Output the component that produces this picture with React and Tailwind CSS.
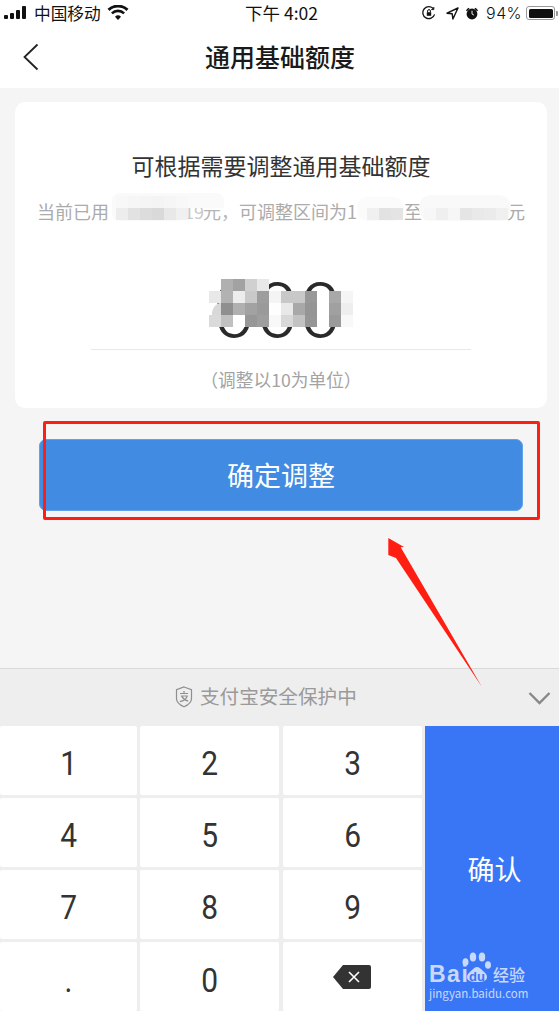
const FONT = '"PingFang SC","Noto Sans CJK SC","Noto Sans",sans-serif';

function Mosaic({ rows, cell = 12, className = "" }) {
  return (
    <div className={`absolute flex flex-col ${className}`}>
      {rows.map((row, r) => (
        <div key={r} className="flex">
          {row.map((c, i) => (
            <div key={i} style={{ width: cell, height: cell, background: c || "transparent" }} />
          ))}
        </div>
      ))}
    </div>
  );
}

function StatusBar() {
  return (
    <div className="h-[29px] flex items-center justify-between relative text-[#111] bg-white pb-[3px]">
      <div className="flex items-center pl-[4px]">
        <svg width="26" height="14" viewBox="0 0 26 14" fill="#111">
          <rect x="0" y="9" width="4" height="4" rx="1" />
          <rect x="6" y="7" width="4" height="6" rx="1" />
          <rect x="12" y="4" width="4" height="9" rx="1" />
          <rect x="18" y="0" width="4" height="13" rx="1" />
        </svg>
        <span className="text-[16.7px] ml-[4px] leading-none">中国移动</span>
        <svg className="ml-[6px]" width="22" height="15" viewBox="0 0 22 15" fill="#111">
          <path d="M11 15l-3-3.300a4.400 4.400 0 0 1 6 0z" />
          <path d="M5.800 9.300L4 7.400a10.200 10.200 0 0 1 14 0l-1.800 1.900a7.600 7.600 0 0 0-10.400 0z" />
          <path d="M2.600 5.900L.5 3.800a15.300 15.300 0 0 1 21 0l-2.100 2.100a12.300 12.300 0 0 0-16.800 0z" />
        </svg>
      </div>
      <span className="absolute left-[245px] top-[2px] text-[17.5px] leading-[22px]">下午 4:02</span>
      <div className="flex items-center mr-[1px]">
        <svg width="14" height="14" viewBox="0 0 14 14" fill="none" stroke="#111" strokeWidth="1.3">
          <path d="M12.600 8.400A6 6 0 1 1 11.600 3" />
          <path d="M11.800 1v2.600H9.200" strokeWidth="1" />
          <rect x="4.800" y="6.200" width="4.400" height="3.600" fill="#111" stroke="none" />
          <path d="M5.600 6.400V5a1.400 1.400 0 0 1 2.800 0v1.400" strokeWidth="1" />
        </svg>
        <svg className="ml-[10px]" width="13" height="13" viewBox="0 0 13 13" fill="none" stroke="#111" strokeWidth="1.4" strokeLinejoin="round">
          <path d="M12 1L1 6.200l5.200.6.7 5.200z" />
        </svg>
        <svg className="ml-[6px]" width="14" height="15" viewBox="0 0 15 15" fill="#111">
          <circle cx="7.500" cy="8" r="5.800" />
          <path d="M1 4l2.600-2.600L5 2.400 2 5zM14 4l-2.600-2.600L10 2.400 13 5z" />
          <path d="M7.500 4.500V8l2 1.200" stroke="#fff" strokeWidth="1" fill="none" />
        </svg>
        <span className="ml-[7px] text-[16px] leading-none tracking-[0.4px]" style={{ fontFamily: "Inter, sans-serif", fontWeight: 300 }}>94%</span>
        <div className="ml-[4px] w-[29px] h-[14px] border border-[#999] rounded-[3px] p-[1.5px] flex">
          <div className="flex-1 bg-[#111] rounded-[1.5px]" />
        </div>
        <div className="w-[2px] h-[5px] bg-[#999] rounded-r-[1px] ml-[1px]" />
      </div>
    </div>
  );
}

function NavBar() {
  return (
    <div className="h-[59px] bg-white relative flex items-center justify-center">
      <svg className="absolute left-[22px] top-[14px]" width="18" height="28" viewBox="0 0 18 28" fill="none" stroke="#222" strokeWidth="1.8">
        <path d="M15.500 1.500L2.500 14l13 12.500" />
      </svg>
      <span className="text-[25px] font-medium text-[#1a1a1a] leading-none mt-[-4px] ml-[1px]">通用基础额度</span>
    </div>
  );
}

function SubLine() {
  return (
    <div className="flex items-center h-[26px] text-[18px] text-[#ababab] leading-none whitespace-nowrap mt-[18px] pl-[22px]">
      <span>当前已用</span>
      <div className="relative w-[60px] h-[20px] shrink-0">
        <div className="absolute left-[3px] top-[-8px] w-[112px] h-[15px] bg-[#fafafa] rounded-t-[8px]" />
        <div className="absolute left-[3px] top-[-1px] w-[72px] h-[21px] bg-[#fafafa] rounded-b-[8px]" />
        <Mosaic
          className="left-[7px] top-[-5px]"
          rows={[["#f8f8f8", "#f6f6f6", "#f5f5f5", "#f4f4f4", "#f6f6f6", "#f8f8f8"], ["#ededed", "#e2e2e2", "#dcdcdc", "#d9d9d9", "#e8e8e8", "#f0f0f0"]]}
        />
      </div>
      <span className="text-[#c9c9c9] w-[34px]">2.19</span>
      <span className="text-[#b5b5b5]">元，</span>
      <span>可调整区间为1</span>
      <div className="relative w-[47px] h-[20px] shrink-0">
        <div className="absolute left-[0px] top-[-4px] w-[47px] h-[24px] bg-[#fbfbfb] rounded-[10px]" />
        <Mosaic className="left-[10px] top-[7px]" rows={[["#f0f0f0", "#e2e2e2", "#e4e4e4"]]} />
      </div>
      <span>至</span>
      <div className="relative w-[85px] h-[20px] shrink-0">
        <div className="absolute left-[-3px] top-[-6px] w-[92px] h-[26px] bg-[#f9f9f9] rounded-[12px]" />
        <Mosaic
          className="left-[2px] top-[7px]"
          rows={[["#f7f7f7", "#efefef", "#f6f6f6", "#e5e5e5", "#e9e9e9", "#ebebeb", "#f0f0f0"]]}
        />
      </div>
      <span>元</span>
    </div>
  );
}

const MOSAIC = [
  [null, "#b0b0b0", "#a2a2a2", "#d0d0d0", "#e8e8e8", null, null, null, null, null, null, null],
  ["#e8e8e8", "#b2b2b2", "#ededed", "#c9c9c9", "#9d9d9d", "#f4f4f4", "#c8c8c8", "#c8c8c8", "#989898", null, "#a8a8a8", "#f5f5f5"],
  [null, "#8f8f8f", "#b0b0b0", "#a2a2a2", "#9a9a9a", "#fefefe", "#e8e8e8", "#a8a8a8", "#959595", null, "#a0a0a0", "#eeeeee"],
  ["#dadada", "#c0c0c0", "#ffffff", "#979797", "#9e9e9e", "#f8f8f8", "#d8d8d8", "#c2c2c2", "#969696", null, "#9a9a9a", "#f8f8f8"],
];

function AmountField() {
  return (
    <div className="relative h-[72px] mt-[55px] flex items-start justify-center">
      <div
        className="absolute left-[198px] top-[-6px] text-[76px] leading-[76px] text-[#2a2a2a] tracking-[1px] whitespace-nowrap"
        style={{ fontFamily: "Roboto, sans-serif", fontWeight: 300 }}
      >
        000
      </div>
      <div className="absolute left-[197px] top-[23px] w-[30px] h-[24px] rounded-l-[12px] bg-[#d8d8d8]" />
      <Mosaic className="left-[194px] top-[0px]" rows={MOSAIC} />
    </div>
  );
}

function Card() {
  return (
    <div className="ml-[15px] mr-[12px] mt-[14px] h-[306px] bg-white rounded-[10px] flex flex-col">
      <div className="text-center text-[23px] text-[#333] leading-[30px] mt-[48px]">可根据需要调整通用基础额度</div>
      <SubLine />
      <AmountField />
      <div className="mx-[76px] h-px bg-[#e8e8e8] mt-[-2px]" />
      <div className="text-center text-[17.7px] text-[#a3a3a3] leading-[24px] mt-[17px]">（调整以10为单位）</div>
    </div>
  );
}

function Key({ children }) {
  return (
    <div
      className="bg-white rounded-[2px] flex items-center justify-center text-[34px] text-[#333] pt-[7px]"
      style={{ fontFamily: "Roboto, sans-serif" }}
    >
      <span className="inline-block scale-x-[0.88]">{children}</span>
    </div>
  );
}

function ConfirmKey() {
  return (
    <div className="row-span-4 bg-[#3976f6] relative flex items-center justify-center">
      <span className="text-[27px] text-white mt-[2px] ml-[5px]">确认</span>
      <div className="absolute left-[4px] top-[226px] w-[115px] h-[50px]">
        <svg className="absolute left-[33px] top-[0px]" width="30" height="30" viewBox="0 0 30 30" fill="#c9d9fb">
          <ellipse cx="3.500" cy="10" rx="3" ry="3.800" />
          <ellipse cx="11" cy="5" rx="3.200" ry="4.500" />
          <ellipse cx="20" cy="5" rx="3.200" ry="4.500" />
          <ellipse cx="26" cy="13" rx="3" ry="3.800" />
          <path d="M5 25c0-3 2-4 4-6 2-2 4-4 6-4s4 2 6 4 4 3 4 6c0 4-4 5-10 5S5 29 5 25z" />
        </svg>
        <span className="absolute left-[0px] top-[11px] text-[23px] font-bold text-[#c9d9fb] leading-[22px] tracking-[1.500px]" style={{ fontFamily: '"Liberation Sans",sans-serif' }}>Bai</span>
        <span className="absolute left-[40px] top-[18px] text-[13px] font-bold text-[#3976f6] leading-[14px]" style={{ fontFamily: '"Liberation Sans",sans-serif' }}>du</span>
        <span className="absolute left-[64px] top-[14px] text-[16px] font-medium text-[#c9d9fb] leading-[16px]">经验</span>
        <span className="absolute left-[0px] top-[34px] text-[11.5px] text-[#c9d9fb] leading-[14px] whitespace-nowrap">jingyan.baidu.com</span>
      </div>
    </div>
  );
}

function Keyboard() {
  return (
    <div className="bg-[#eeeeee]">
      <div className="h-[58px] border-t border-[#d9d9d9] relative flex items-center">
        <svg className="absolute left-[175px] top-[17px]" width="18" height="22" viewBox="0 0 18 22" fill="none" stroke="#8f8f8f" strokeWidth="1.200">
          <path d="M9 1l7.500 2.600v9c0 3.800-4 6.800-7.500 8.200-3.500-1.400-7.500-4.400-7.500-8.200v-9z" />
          <path d="M5 7.500h8M9 5v2.500M5.800 10h6.400c-1 3.400-4 5-7.400 5.600M6.800 10.400c1.400 2.600 3.600 4 6.400 4.800" />
        </svg>
        <span className="absolute left-[200px] top-[14px] text-[19.6px] leading-[26px] text-[#9a9a9a]">支付宝安全保护中</span>
        <svg className="absolute left-[528px] top-[22px]" width="23" height="14" viewBox="0 0 23 14" fill="none" stroke="#888" strokeWidth="2.400">
          <path d="M1.500 2l10 10 10-10" />
        </svg>
      </div>
      <div className="grid grid-cols-[137px_139px_139px_134px] gap-x-[3.33px] gap-y-[3.5px] grid-rows-[repeat(4,68.6px)] h-[285px]">
        <Key>1</Key>
        <Key>2</Key>
        <Key>3</Key>
        <ConfirmKey />
        <Key>4</Key>
        <Key>5</Key>
        <Key>6</Key>
        <Key>7</Key>
        <Key>8</Key>
        <Key>9</Key>
        <Key>.</Key>
        <Key>0</Key>
        <div className="bg-white rounded-[2px] flex items-center justify-center">
          <svg width="40" height="26" viewBox="0 0 40 26">
            <path d="M11 1h26a2 2 0 0 1 2 2v20a2 2 0 0 1-2 2H11L1 13z" fill="#333" />
            <path d="M17 8l10 10M27 8L17 18" stroke="#fff" strokeWidth="1.600" />
          </svg>
        </div>
      </div>
    </div>
  );
}

export default function App() {
  return (
    <div className="relative w-[559px] h-[1011px] overflow-hidden flex flex-col bg-[#f5f5f5]" style={{ fontFamily: FONT }}>
      <StatusBar />
      <NavBar />
      <div className="flex-1 flex flex-col">
        <Card />
        <div className="ml-[39px] mr-[36px] mt-[31px] h-[72px] bg-[#418ce2] border border-[#63a1e8] rounded-[7px] flex items-center justify-center text-white text-[27px]">
          确定调整
        </div>
      </div>
      <Keyboard />
      <div className="absolute left-[43px] top-[421px] w-[497px] h-[99px] border-[3px] border-[#ff1e12] rounded-[2px]" />
      <svg className="absolute left-[385px] top-[535px]" width="100" height="156" viewBox="385 535 100 156">
        <polygon points="388.300,538 404,547 400.700,547.300 481.800,686.800 396,558 388.300,555" fill="#ff1e12" />
      </svg>
    </div>
  );
}
